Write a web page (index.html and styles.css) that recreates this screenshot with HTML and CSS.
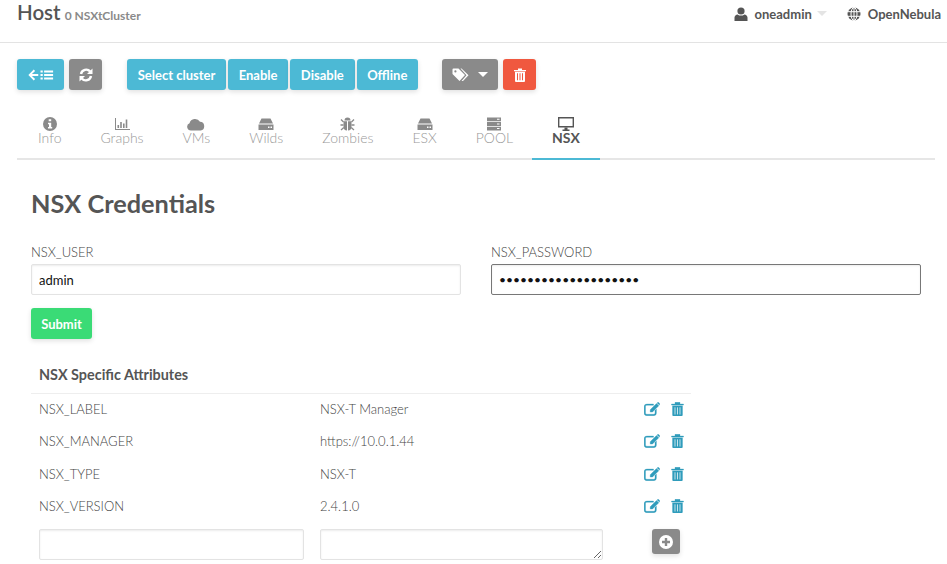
FILE: index.html
```html
<!DOCTYPE html>
<html lang="en">
<head>
  <meta charset="UTF-8">
  <title>Host NSXtCluster</title>
  <link rel="stylesheet" href="styles.css">
</head>
<body>
  <header class="topbar">
    <h1 class="title">Host <small>0 <span>NSXtCluster</span></small></h1>
    <div class="usermenu">
      <span class="menuitem">
        <svg class="ico" width="14" height="14" viewBox="0 0 14 14"><circle cx="7" cy="4" r="3.6"/><path d="M0.5 14V10.6C0.5 8.8 2 7.6 3.6 7.4C4.5 8.2 5.7 8.6 7 8.6S9.500 8.200 10.400 7.400C12 7.600 13.500 8.800 13.500 10.600V14Z"/></svg>
        oneadmin
        <i class="caret"></i>
      </span>
      <span class="menuitem">
        <svg class="ico" width="14" height="14" viewBox="0 0 14 14"><circle cx="7" cy="7" r="6.500"/><g fill="none" stroke="#fff" stroke-width="1"><ellipse cx="7" cy="7" rx="3" ry="6.500"/><path d="M7 0V14M0 4.700H14M0 9.300H14"/></g></svg>
        OpenNebula
      </span>
    </div>
  </header>

  <div class="toolbar">
    <button class="btn info back">
      <svg width="27" height="14" viewBox="0 0 30 14" fill="#fff"><path d="M7.500 1L1.500 7L7.500 13L9 11.500L5.500 8.200H12.500V5.800H5.500L9 2.500Z"/><path d="M15 2h2.500v2.200H15zM19 2h10v2.200H19zM15 5.900h2.500v2.200H15zM19 5.900h10v2.200H19zM15 9.800h2.500v2.200H15zM19 9.800h10v2.200H19z"/></svg>
    </button>
    <button class="btn gray square">
      <svg width="14" height="14" viewBox="0 0 14 14" fill="none" stroke="#fff" stroke-width="2.400"><path d="M2 6A5.200 5.200 0 0 1 11.200 3.600"/><path d="M12 8A5.200 5.200 0 0 1 2.800 10.400"/><path d="M13.500 0.500V6H8Z" fill="#fff" stroke="none"/><path d="M0.500 13.500V8H6Z" fill="#fff" stroke="none"/></svg>
    </button>
    <div class="btngroup">
      <button class="btn info">Select cluster</button>
      <button class="btn info">Enable</button>
      <button class="btn info">Disable</button>
      <button class="btn info">Offline</button>
    </div>
    <button class="btn gray labels">
      <svg width="18" height="14" viewBox="0 0 18 14"><path d="M0.500 1.500A1 1 0 0 1 1.500 0.500H6.500L13 7L7.500 13L0.500 6Z" fill="#fff"/><circle cx="3.400" cy="3.400" r="1.100" fill="#8a8a8a"/><path d="M8.500 0.500H9.500L16.500 7.300L11 13H9.500L14.500 7.300Z" fill="#fff"/></svg>
      <i class="caret white"></i>
    </button>
    <button class="btn red square">
      <svg width="12" height="14" viewBox="0 0 12 14" fill="#fff"><path d="M0 2h12v1.300H0zM4 0.400h4V2H4z"/><path d="M1 3.800h10V13a1 1 0 0 1-1 1H2a1 1 0 0 1-1-1z"/><path d="M3 5.300h1v7H3zM5.500 5.300h1v7h-1zM8 5.300h1v7H8z" fill="#f0583f"/></svg>
    </button>
  </div>

  <nav class="tabs">
    <a class="tab">
      <svg class="ico" width="14" height="14" viewBox="0 0 14 14"><circle cx="7" cy="7" r="7"/><path d="M5.700 2.300h2.500v2H5.700zM5 5.800h3.200v4.200h1v1.500H5V10h1V7.300H5z" fill="#fff"/></svg>
      Info
    </a>
    <a class="tab">
      <svg class="ico" width="15" height="14" viewBox="0 0 15 14"><path d="M0 1h1v11h14v1H0zM2.500 8h1.600v3H2.500zM5.200 5h1.600v6H5.200zM8 6.500h1.600V11H8zM10.700 2.500h1.600V11h-1.600z"/></svg>
      Graphs
    </a>
    <a class="tab">
      <svg class="ico" width="18" height="14" viewBox="0 0 18 14"><path d="M4 13.500A3.800 3.800 0 0 1 2.500 6.200A5.800 5.800 0 0 1 13 4.800A4.400 4.400 0 0 1 13.700 13.500Z"/></svg>
      VMs
    </a>
    <a class="tab">
      <svg class="ico" width="16" height="14" viewBox="0 0 16 14"><path d="M3.500 1.500h9L15 6.500H1Z"/><path d="M0.500 7.500H15.500V13H0.500Z"/><path d="M10 9.600h1.500v1.400H10zM12.500 9.600H14v1.400h-1.500z" fill="#fff"/></svg>
      Wilds
    </a>
    <a class="tab">
      <svg class="ico" width="15" height="14" viewBox="0 0 15 14"><path d="M4.500 3.500A3 3 0 0 1 10.500 3.500Z"/><path d="M3.500 4.300H7V13.500A3.500 4 0 0 1 3.500 9.500ZM8 4.300H11.500V9.500A3.500 4 0 0 1 8 13.500Z"/><path d="M1 2.500L3.500 5M14 2.500L11.500 5M0.500 8H3.500M14.500 8H11.500M1 13L3.800 10.500M14 13L11.200 10.500" stroke="#8a8a8a" stroke-width="1.300"/></svg>
      Zombies
    </a>
    <a class="tab">
      <svg class="ico" width="16" height="14" viewBox="0 0 16 14"><path d="M3.500 1.500h9L15 6.500H1Z"/><path d="M0.500 7.500H15.500V13H0.500Z"/><path d="M10 9.600h1.500v1.400H10zM12.500 9.600H14v1.400h-1.500z" fill="#fff"/></svg>
      ESX
    </a>
    <a class="tab">
      <svg class="ico" width="14" height="14" viewBox="0 0 14 14"><path d="M0 0.500h14v3.800H0zM0 5.100h14v3.800H0zM0 9.700h14v3.800H0z"/><path d="M10 1.800h2.500v1H10zM10 6.500h2.500v1H10zM10 11.100h2.500v1H10z" fill="#fff"/></svg>
      POOL
    </a>
    <a class="tab active">
      <svg class="ico" width="16" height="14" viewBox="0 0 16 14"><path d="M0 0h16v10.500H0zM1.400 1.400v7.700h13.200V1.400z" fill-rule="evenodd"/><path d="M6.500 10.500h3V12.500h2V14h-7v-1.500h2z"/></svg>
      NSX
    </a>
  </nav>

  <main class="content">
    <h2 class="heading">NSX Credentials</h2>
    <form class="creds">
      <label class="field">NSX_USER
        <input type="text" value="admin">
      </label>
      <label class="field">NSX_PASSWORD
        <input class="focused" type="password" value="12345678901234567890">
      </label>
    </form>
    <button class="btn submit">Submit</button>

    <table class="attrs">
      <colgroup>
        <col class="col-key">
        <col class="col-value">
        <col class="col-actions">
      </colgroup>
      <thead>
        <tr><th colspan="3">NSX Specific Attributes</th></tr>
      </thead>
      <tbody>
        <tr>
          <td>NSX_LABEL</td><td>NSX-T Manager</td>
          <td class="actions"><svg class="edit" width="16" height="14" viewBox="0 0 16 14"><use href="#edit-icon"/></svg><svg class="trash" width="13" height="14" viewBox="0 0 13 14"><use href="#trash-icon"/></svg></td>
        </tr>
        <tr>
          <td>NSX_MANAGER</td><td>https://10.0.1.44</td>
          <td class="actions"><svg class="edit" width="16" height="14" viewBox="0 0 16 14"><use href="#edit-icon"/></svg><svg class="trash" width="13" height="14" viewBox="0 0 13 14"><use href="#trash-icon"/></svg></td>
        </tr>
        <tr>
          <td>NSX_TYPE</td><td>NSX-T</td>
          <td class="actions"><svg class="edit" width="16" height="14" viewBox="0 0 16 14"><use href="#edit-icon"/></svg><svg class="trash" width="13" height="14" viewBox="0 0 13 14"><use href="#trash-icon"/></svg></td>
        </tr>
        <tr>
          <td>NSX_VERSION</td><td>2.4.1.0</td>
          <td class="actions"><svg class="edit" width="16" height="14" viewBox="0 0 16 14"><use href="#edit-icon"/></svg><svg class="trash" width="13" height="14" viewBox="0 0 13 14"><use href="#trash-icon"/></svg></td>
        </tr>
        <tr class="newrow">
          <td><input type="text"></td>
          <td><textarea rows="1"></textarea></td>
          <td>
            <button class="btn gray add">
              <svg width="14" height="14" viewBox="0 0 14 14"><circle cx="7" cy="7" r="7" fill="#fff"/><path d="M5.800 3h2.400v2.800H11v2.400H8.200V11H5.800V8.200H3V5.800h2.800z" fill="#8a8a8a"/></svg>
            </button>
          </td>
        </tr>
      </tbody>
    </table>
  </main>

  <svg class="defs" width="0" height="0">
    <symbol id="edit-icon" viewBox="0 0 16 14">
      <path d="M3 2H9.500V3.300H3A1.300 1.300 0 0 0 1.500 4.600V11A1.300 1.300 0 0 0 3 12.300H9.500A1.300 1.300 0 0 0 11 11V8.500L12.400 7.100V11A2.800 2.800 0 0 1 9.500 13.700H3A2.800 2.800 0 0 1 0.100 11V4.600A2.800 2.800 0 0 1 3 2Z"/>
      <path d="M12.500 1.500L14.800 3.800L8.500 10.100H6.200V7.800ZM13.300 0.700Q14 0 14.700 0.500L15.600 1.400Q16.100 2.100 15.500 2.800L15.300 3.100L13 0.900Z"/>
    </symbol>
    <symbol id="trash-icon" viewBox="0 0 13 14">
      <path d="M0.500 2H12.500V3.100H0.500ZM4 0.300H9V2H4ZM1.500 3.800H11.500V13A1 1 0 0 1 10.500 14H2.500A1 1 0 0 1 1.500 13Z"/>
      <path d="M3.500 5.200H4.500V12.500H3.500ZM6 5.200H7V12.500H6ZM8.500 5.200H9.500V12.500H8.500Z" fill="#fff"/>
    </symbol>
  </svg>
</body>
</html>
```

FILE: styles.css
```css
* {
  box-sizing: border-box;
}
body {
  margin: 0;
  background-color: #fff;
  color: #555;
  font-family: Lato, "Open Sans", sans-serif;
  font-size: 14px;
  overflow: hidden;
}
.topbar {
  height: 43px;
  margin-bottom: 16px;
  padding: 0 6px 0 17px;
  border-bottom: 1px solid #e3e3e3;
  display: flex;
  justify-content: space-between;
}
.title {
  margin: 0;
  font-size: 20.500px;
  font-weight: 600;
  line-height: 24px;
  color: #555;
}
.title small {
  margin-left: -1px;
  font-size: 12px;
  font-weight: 700;
  color: #8a8a8a;
}
.usermenu {
  display: flex;
  gap: 20px;
  padding-top: 6px;
  font-weight: 700;
  font-size: 13px;
  color: #555;
}
.menuitem {
  display: flex;
  align-items: flex-start;
  gap: 7px;
  line-height: 16px;
}
.menuitem .ico {
  fill: #555;
  margin-top: 1px;
}
.caret {
  width: 0;
  height: 0;
  margin: 5px 0 0 -2px;
  border: 5px solid transparent;
  border-top: 5px solid #e4e4e4;
  border-bottom: 0;
}
.caret.white {
  border-top-color: #fff;
  margin: 0 0 0 8px;
}
.toolbar {
  display: flex;
  padding-left: 17px;
  gap: 5px;
}
.btngroup {
  display: flex;
  gap: 2px;
  margin: 0 19px 0 20px;
}
.btngroup .btn {
  padding: 0 10.700px;
}
.btn {
  height: 31px;
  padding: 0 10px;
  border: 0;
  border-radius: 3px;
  color: #fff;
  font-family: Lato, sans-serif;
  font-size: 13px;
  font-weight: 700;
  display: flex;
  align-items: center;
  justify-content: center;
  box-shadow: 0 2px 5px rgba(0, 0, 0, 0.12);
}
.btn.info {
  background-color: #4cb9d5;
}
.btn.gray {
  background-color: #8a8a8a;
}
.btn.red {
  background-color: #f0583f;
  width: 32px;
}
.btn.square {
  width: 33px;
  padding: 0;
}
.btn.labels {
  width: 56px;
  padding: 0;
}
.tabs {
  display: flex;
  margin: 22px 12px 0 17px;
  padding-left: 1px;
  height: 48px;
  border-bottom: 2px solid #e6e6e6;
  color: #999;
}
.tab {
  height: 48px;
  padding: 5px 20px 0;
  text-align: center;
  line-height: 17px;
  font-size: 14px;
  font-weight: 300;
  margin-right: -1px;
}
.tab .ico {
  display: block;
  margin: 0 auto -2px;
  fill: #8a8a8a;
}
.tab.active {
  color: #555;
  font-weight: 700;
  border-bottom: 2px solid #4cb9d5;
}
.tab.active .ico {
  fill: #555;
}
.content {
  padding: 0 26px 0 31px;
}
.heading {
  margin: 27px 0 0;
  font-size: 25.300px;
  font-weight: 700;
  line-height: 32px;
  color: #555;
}
.creds {
  display: flex;
  gap: 30px;
  margin-top: 25px;
}
.field {
  flex: 1;
  display: block;
  font-size: 13px;
  font-weight: 300;
  line-height: 16px;
  color: #444;
}
input, textarea {
  display: block;
  width: 100%;
  height: 31px;
  margin: 4px 0 0;
  padding: 0 7px;
  border: 1px solid #e3e3e3;
  border-radius: 2px;
  background-color: #fff;
  box-shadow: inset 0 1px 2px rgba(0, 0, 0, 0.08);
  color: #111;
  font-family: Lato, sans-serif;
  font-size: 13px;
  font-weight: 400;
  outline: none;
}
input.focused {
  border-color: #777;
  font-size: 12.100px;
}
.submit {
  margin-top: 13px;
  width: 61px;
  padding: 0;
  background-color: #3adb76;
}
.attrs {
  width: 660px;
  margin-top: 16px;
  border-collapse: collapse;
  table-layout: fixed;
  font-size: 13px;
  font-weight: 300;
  color: #444;
}
.col-key {
  width: 281px;
}
.col-value {
  width: 299px;
}
.col-actions {
  width: 80px;
}
.attrs th {
  height: 38px;
  padding: 1px 8px 0;
  text-align: left;
  font-size: 14.400px;
  font-weight: 700;
  color: #555;
  border-bottom: 1px solid #eee;
}
.attrs td {
  height: 32.300px;
  padding: 0 8px;
}
.attrs .actions {
  white-space: nowrap;
  line-height: 0;
}
.actions svg {
  vertical-align: top;
  fill: #2f9cbc;
  stroke: #2f9cbc;
  stroke-width: 0.3;
}
.actions .edit {
  margin: 0 11px 0 25px;
}
.attrs .newrow td {
  height: 46px;
  padding-top: 7px;
  vertical-align: top;
}
.newrow input, .newrow textarea {
  margin: 0;
}
.newrow textarea {
  resize: vertical;
}
.btn.add {
  width: 28px;
  height: 25px;
  padding: 0;
  margin-left: 33px;
}
.defs {
  position: absolute;
}
```
